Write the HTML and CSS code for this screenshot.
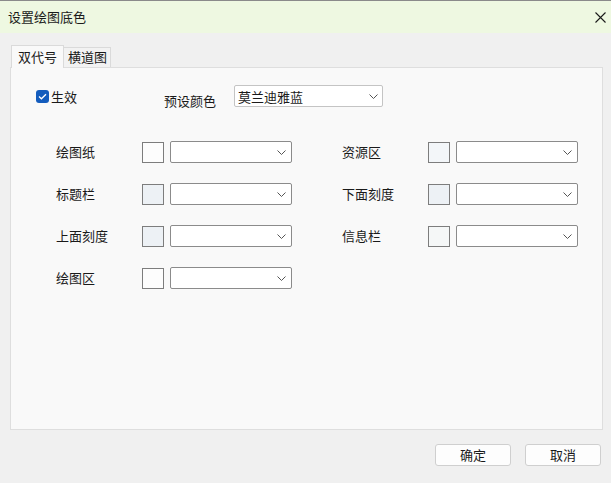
FILE: index.html
```html
<!DOCTYPE html>
<html lang="zh">
<head>
<meta charset="utf-8">
<title>设置绘图底色</title>
<link rel="stylesheet" href="styles.css">
</head>
<body>
<div class="window">
  <div class="titlebar">
    <span class="title">设置绘图底色</span>
    <svg class="close" width="11" height="11" viewBox="0 0 11 11"><path d="M0.5 0.5 L10.5 10.5 M10.5 0.5 L0.5 10.5" stroke="#1a1a1a" stroke-width="1.1" fill="none"/></svg>
  </div>
  <div class="content">
    <div class="tabs">
      <div class="tab active">双代号</div>
      <div class="tab">横道图</div>
    </div>
    <div class="panel">
      <div class="toprow">
        <label class="check">
          <span class="box"><svg width="9" height="7" viewBox="0 0 9 7"><path d="M1 3.6 L3.4 5.8 L8 1.2" stroke="#fff" stroke-width="1.3" fill="none"/></svg></span>
          <span>生效</span>
        </label>
        <span class="preset-label">预设颜色</span>
        <div class="select preset"><span>莫兰迪雅蓝</span><svg class="chev" width="9" height="5" viewBox="0 0 9 5"><path d="M0.5 0.5 L4.5 4.5 L8.5 0.5" stroke="#555" stroke-width="1" fill="none"/></svg></div>
      </div>
      <div class="form">
        <span class="lbl">绘图纸</span><span class="sw c-white"></span><div class="select"><svg class="chev" width="9" height="5" viewBox="0 0 9 5"><path d="M0.5 0.5 L4.5 4.5 L8.5 0.5" stroke="#555" stroke-width="1" fill="none"/></svg></div>
        <span class="lbl right">资源区</span><span class="sw c-res"></span><div class="select"><svg class="chev" width="9" height="5" viewBox="0 0 9 5"><path d="M0.5 0.5 L4.5 4.5 L8.5 0.5" stroke="#555" stroke-width="1" fill="none"/></svg></div>

        <span class="lbl">标题栏</span><span class="sw c-blue"></span><div class="select"><svg class="chev" width="9" height="5" viewBox="0 0 9 5"><path d="M0.5 0.5 L4.5 4.5 L8.5 0.5" stroke="#555" stroke-width="1" fill="none"/></svg></div>
        <span class="lbl right">下面刻度</span><span class="sw c-blue"></span><div class="select"><svg class="chev" width="9" height="5" viewBox="0 0 9 5"><path d="M0.5 0.5 L4.5 4.5 L8.5 0.5" stroke="#555" stroke-width="1" fill="none"/></svg></div>

        <span class="lbl">上面刻度</span><span class="sw c-blue"></span><div class="select"><svg class="chev" width="9" height="5" viewBox="0 0 9 5"><path d="M0.5 0.5 L4.5 4.5 L8.5 0.5" stroke="#555" stroke-width="1" fill="none"/></svg></div>
        <span class="lbl right">信息栏</span><span class="sw c-info"></span><div class="select"><svg class="chev" width="9" height="5" viewBox="0 0 9 5"><path d="M0.5 0.5 L4.5 4.5 L8.5 0.5" stroke="#555" stroke-width="1" fill="none"/></svg></div>

        <span class="lbl">绘图区</span><span class="sw c-white"></span><div class="select"><svg class="chev" width="9" height="5" viewBox="0 0 9 5"><path d="M0.5 0.5 L4.5 4.5 L8.5 0.5" stroke="#555" stroke-width="1" fill="none"/></svg></div>
      </div>
    </div>
    <div class="buttons">
      <button class="btn">确定</button>
      <button class="btn">取消</button>
    </div>
  </div>
</div>
</body>
</html>
```

FILE: styles.css
```css
html, body {
  margin: 0;
  padding: 0;
}
body {
  width: 611px;
  height: 483px;
  background: #f0f0f0;
  font-family: "Noto Sans CJK SC", "Noto Sans", sans-serif;
  font-size: 13px;
  color: #1a1a1a;
  overflow: hidden;
}
.window {
  display: flex;
  flex-direction: column;
  height: 483px;
}
.titlebar {
  box-sizing: border-box;
  height: 33px;
  border-top: 1px solid #8a8a8a;
  background: #eef8e1;
  display: flex;
  align-items: center;
  justify-content: space-between;
  padding: 0 5px 0 8px;
}
.title {
  font-size: 13px;
  line-height: 16px;
  margin-top: -1px;
}
.close {
  margin-top: 1px;
}
.content {
  padding: 12px 8px 0 10px;
  display: flex;
  flex-direction: column;
}
.tabs {
  display: flex;
  align-items: flex-end;
  height: 22px;
  margin-left: 1px;
  position: relative;
  z-index: 1;
}
.tab {
  box-sizing: border-box;
  white-space: nowrap;
  border: 1px solid #dadada;
  border-bottom: none;
  border-left: none;
  background: #f2f2f2;
  height: 20px;
  line-height: 18px;
  padding: 0 3px 0 4px;
  font-size: 13px;
}
.tab.active {
  height: 23px;
  margin-bottom: -1px;
  background: #f9f9f9;
  border-left: 1px solid #dadada;
  padding: 1px 0 0 6px;
  line-height: 19px;
  width: 53px;
}
.panel {
  box-sizing: border-box;
  width: 593px;
  height: 363px;
  background: #f9f9f9;
  border: 1px solid #dedede;
  padding: 17px 0 0 25px;
}
.toprow {
  display: flex;
  align-items: center;
  height: 22px;
}
.check {
  display: flex;
  align-items: center;
  gap: 2px;
  width: 128px;
}
.box {
  width: 13px;
  height: 13px;
  border-radius: 3px;
  background: #135cbd;
  display: flex;
  align-items: center;
  justify-content: center;
}
.preset-label {
  width: 70px;
  margin-top: 8px;
}
.select {
  box-sizing: border-box;
  width: 122px;
  height: 22px;
  border: 1px solid #8b8b8b;
  border-radius: 2px;
  background: #fff;
  display: flex;
  align-items: center;
  padding: 0 5px 0 3px;
}
.select .chev {
  margin-left: auto;
}
.select.preset {
  width: 149px;
  border-color: #c4c4c4;
  padding-right: 4px;
}
.form {
  margin-top: 34px;
  margin-left: 20px;
  display: grid;
  grid-template-columns: 86px 22px 128px 136px 22px 128px;
  grid-auto-rows: 22px;
  row-gap: 20px;
  align-items: end;
}
.form .select {
  margin-left: 6px;
}
.lbl {
  height: 22px;
  line-height: 22px;
  white-space: nowrap;
}
.lbl.right {
  margin-left: 50px;
}
.sw {
  box-sizing: border-box;
  width: 22px;
  height: 21px;
  border: 1px solid #7d7d7d;
}
.c-white { background: #fdfdfd; }
.c-blue { background: #edf1f5; }
.c-res { background: #f3f6f9; }
.c-info { background: #f5f7f7; }
.buttons {
  display: flex;
  justify-content: flex-end;
  gap: 14px;
  margin-top: 14px;
  padding-right: 2px;
}
.btn {
  box-sizing: border-box;
  width: 76px;
  height: 22px;
  border: 1px solid #cfcfcf;
  border-radius: 3px;
  background: #fdfdfd;
  font-family: "Noto Sans CJK SC", "Noto Sans", sans-serif;
  font-size: 13px;
  color: #1a1a1a;
  padding: 0;
  line-height: 20px;
}
```
